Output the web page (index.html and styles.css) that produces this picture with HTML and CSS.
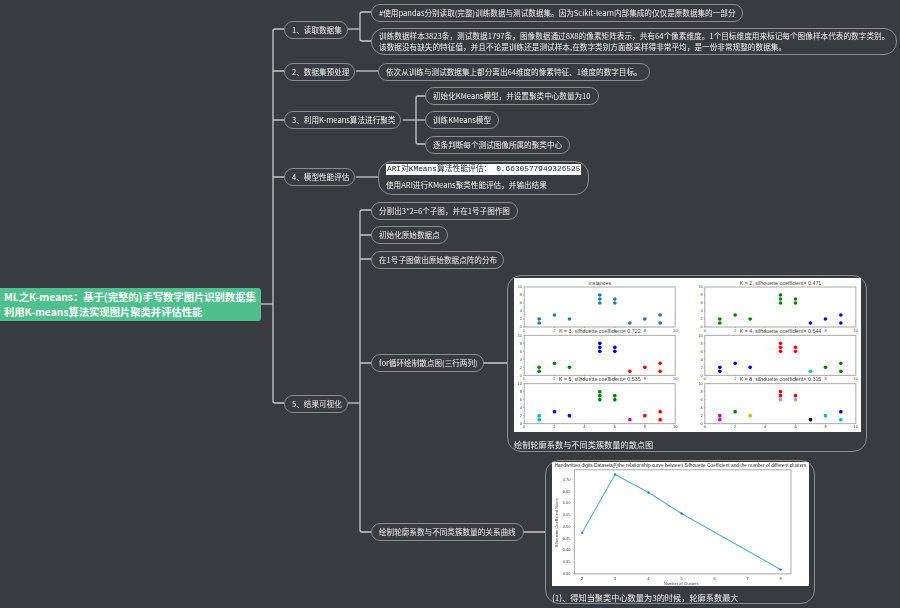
FILE: index.html
```html
<!DOCTYPE html>
<html lang="zh-CN">
<head>
  <meta charset="UTF-8" />
  <meta name="viewport" content="width=device-width, initial-scale=1.0"/>
  <title>ML之K-means</title>
  <link rel="stylesheet" href="styles.css">
</head>
<body>

  <div class="map">

    <!-- branch lines, drawn under the nodes -->
    <svg class="links" viewBox="0 0 900 608">
      <path d="M261 304H273"/>
      <path d="M284 29H275Q273 29 273 31V401Q273 403 275 403H284"/>
      <path d="M273 71H284M273 120H284M273 177H284"/>

      <path d="M348 29H360"/>
      <path d="M371 12H362Q360 12 360 14V39Q360 41 362 41H371"/>
      <path d="M356 71H378"/>

      <path d="M403 120H425"/>
      <path d="M425 96H418Q416 96 416 98V142Q416 144 418 144H425"/>
      <path d="M356 177H378"/>

      <path d="M348 403H360"/>
      <path d="M371 210H362Q360 210 360 212V530Q360 532 362 532H371"/>
      <path d="M360 235H371M360 259H371M360 363H371"/>
      <path d="M483 363H507M521 532H545"/>
    </svg>

    <div class="node root">ML之K-means：基于(完整的)手写数字图片识别数据集<br>利用K-means算法实现图片聚类并评估性能</div>

    <div class="node step n1">1、读取数据集</div>
    <div class="node step n2">2、数据集预处理</div>
    <div class="node step n3">3、利用K-means算法进行聚类</div>
    <div class="node step n4">4、模型性能评估</div>
    <div class="node step n5">5、结果可视化</div>

    <div class="node n1a">#使用pandas分别读取(完整)训练数据与测试数据集。因为Scikit-learn内部集成的仅仅是原数据集的一部分</div>
    <div class="node n1b">训练数据样本3823条，测试数据1797条，图像数据通过8X8的像素矩阵表示，共有64个像素维度。1个目标维度用来标记每个图像样本代表的数字类别。<br>该数据没有缺失的特征值，并且不论是训练还是测试样本,在数字类别方面都采样得非常平均，是一份非常规整的数据集。</div>
    <div class="node n2a">依次从训练与测试数据集上都分离出64维度的像素特征、1维度的数字目标。</div>
    <div class="node n3a">初始化KMeans模型，并设置聚类中心数量为10</div>
    <div class="node n3b">训练KMeans模型</div>
    <div class="node n3c">逐条判断每个测试图像所属的聚类中心</div>
    <div class="node n4a">
      <span class="score">ARI对KMeans算法性能评估： 0.6630577949326525</span>
      <span>使用ARI进行KMeans聚类性能评估，并输出结果</span>
    </div>

    <div class="node n5a">分割出3*2=6个子图，并在1号子图作图</div>
    <div class="node n5b">初始化原始数据点</div>
    <div class="node n5c">在1号子图做出原始数据点阵的分布</div>
    <div class="node n5d">for循环绘制散点图(三行两列)</div>
    <div class="node n5e">绘制轮廓系数与不同类簇数量的关系曲线</div>

    <div class="node n5d1">
      <svg class="plot scatter" viewBox="0 0 1040 462">
        <defs>
          <g id="p-a"><circle cx="45" cy="-12" r="5.5"/><circle cx="45" cy="-24" r="5.5"/></g>
          <g id="p-b"><circle cx="91" cy="-36" r="5.5"/></g>
          <g id="p-c"><circle cx="136" cy="-24" r="5.5"/></g>
          <g id="p-d"><circle cx="227" cy="-72" r="5.5"/><circle cx="272" cy="-72" r="5.5"/></g>
          <g id="p-e"><circle cx="227" cy="-84" r="5.5"/><circle cx="227" cy="-96" r="5.5"/><circle cx="272" cy="-84" r="5.5"/></g>
          <g id="p-f"><circle cx="317" cy="-12" r="5.5"/></g>
          <g id="p-g"><circle cx="362" cy="-24" r="5.5"/></g>
          <g id="p-h"><circle cx="408" cy="-12" r="5.5"/></g>
          <g id="p-i"><circle cx="408" cy="-36" r="5.5"/></g>
          <g id="frame">
            <rect class="frame" x="0" y="-120" width="453" height="120"/>
            <path class="ticks" d="M91 0v3M181 0v3M272 0v3M362 0v3M0 0h-3M0 -24h-3M0 -48h-3M0 -72h-3M0 -96h-3"/>
            <text x="0" y="14" class="tick">0</text><text x="91" y="14" class="tick">2</text>
            <text x="181" y="14" class="tick">4</text><text x="272" y="14" class="tick">6</text>
            <text x="362" y="14" class="tick">8</text><text x="453" y="14" class="tick">10</text>
            <text x="-10" y="4" class="tick">0</text><text x="-10" y="-20" class="tick">2</text>
            <text x="-10" y="-44" class="tick">4</text><text x="-10" y="-68" class="tick">6</text>
            <text x="-10" y="-92" class="tick">8</text><text x="-13" y="-116" class="tick">10</text>
          </g>
        </defs>

        <g transform="translate(30 147)">
          <use href="#frame"/>
          <text class="title" x="227" y="-127">instances</text>
          <g fill="#1f77b4">
            <use href="#p-a"/><use href="#p-b"/><use href="#p-c"/><use href="#p-d"/><use href="#p-e"/>
            <use href="#p-f"/><use href="#p-g"/><use href="#p-h"/><use href="#p-i"/>
          </g>
        </g>
        <g transform="translate(572 147)">
          <use href="#frame"/>
          <text class="title" x="227" y="-127">K = 2, silhouette coefficient= 0.471</text>
          <g fill="#008000">
            <use href="#p-a"/><use href="#p-b"/><use href="#p-c"/><use href="#p-d"/><use href="#p-e"/>
          </g>
          <g fill="#0000ff">
            <use href="#p-f"/><use href="#p-g"/><use href="#p-h"/><use href="#p-i"/>
          </g>
        </g>
        <g transform="translate(30 292)">
          <use href="#frame"/>
          <text class="title" x="227" y="-127">K = 3, silhouette coefficient= 0.722</text>
          <g fill="#008000"><use href="#p-a"/><use href="#p-b"/><use href="#p-c"/></g>
          <g fill="#0000ff"><use href="#p-d"/><use href="#p-e"/></g>
          <g fill="#ff0000"><use href="#p-f"/><use href="#p-g"/><use href="#p-h"/><use href="#p-i"/></g>
        </g>
        <g transform="translate(572 292)">
          <use href="#frame"/>
          <text class="title" x="227" y="-127">K = 4, silhouette coefficient= 0.644</text>
          <g fill="#0000ff"><use href="#p-a"/><use href="#p-b"/><use href="#p-c"/></g>
          <g fill="#ff0000"><use href="#p-d"/><use href="#p-e"/></g>
          <use href="#p-f" fill="#00bfbf"/>
          <g fill="#008000"><use href="#p-g"/><use href="#p-h"/><use href="#p-i"/></g>
        </g>
        <g transform="translate(30 437)">
          <use href="#frame"/>
          <text class="title" x="227" y="-127">K = 5, silhouette coefficient= 0.535</text>
          <use href="#p-a" fill="#00bfbf"/>
          <g fill="#0000ff"><use href="#p-b"/><use href="#p-c"/></g>
          <g fill="#008000"><use href="#p-d"/><use href="#p-e"/></g>
          <use href="#p-f" fill="#bf00bf"/>
          <g fill="#ff0000"><use href="#p-g"/><use href="#p-h"/><use href="#p-i"/></g>
        </g>
        <g transform="translate(572 437)">
          <use href="#frame"/>
          <text class="title" x="227" y="-127">K = 8, silhouette coefficient= 0.315</text>
          <use href="#p-a" fill="#bf00bf"/>
          <use href="#p-b" fill="#008000"/>
          <use href="#p-c" fill="#bfbf00"/>
          <use href="#p-d" fill="#9aa0ff"/>
          <use href="#p-e" fill="#ff0000"/>
          <use href="#p-f" fill="#000000"/>
          <g fill="#00bfbf"><use href="#p-g"/><use href="#p-h"/></g>
          <use href="#p-i" fill="#0000ff"/>
        </g>
      </svg>
      <span>绘制轮廓系数与不同类簇数量的散点图</span>
    </div>

    <div class="node n5e1">
      <svg class="plot curve" viewBox="0 0 770 371">
        <text class="title" x="385" y="15">Handwritten digits Datasets的the relationship curve between Silhouette Coefficient and the number of different clusters</text>
        <rect class="frame" x="67" y="23" width="649" height="312"/>
        <g>
          <text class="tick" x="90" y="353">2</text><text class="tick" x="189" y="353">3</text>
          <text class="tick" x="289" y="353">4</text><text class="tick" x="388" y="353">5</text>
          <text class="tick" x="487" y="353">6</text><text class="tick" x="586" y="353">7</text>
          <text class="tick" x="685" y="353">8</text>
        </g>
        <g>
          <text class="tick" x="44" y="57">0.70</text><text class="tick" x="44" y="92">0.65</text>
          <text class="tick" x="44" y="127">0.60</text><text class="tick" x="44" y="162">0.55</text>
          <text class="tick" x="44" y="197">0.50</text><text class="tick" x="44" y="232">0.45</text>
          <text class="tick" x="44" y="267">0.40</text><text class="tick" x="44" y="302">0.35</text>
          <text class="tick" x="44" y="337">0.30</text>
        </g>
        <text class="tick" x="387" y="367">Number of Clusters</text>
        <text class="tick" transform="translate(19 182) rotate(-90)">Silhouette Coefficient Score</text>
        <polyline class="line" points="90,212 189,37 289,91 388,154 685,322"/>
        <g class="marks">
          <circle cx="90" cy="212" r="3.5"/><circle cx="189" cy="37" r="3.5"/><circle cx="289" cy="91" r="3.5"/>
          <circle cx="388" cy="154" r="3.5"/><circle cx="685" cy="322" r="3.5"/>
        </g>
      </svg>
      <span>(1)、得知当聚类中心数量为3的时候，轮廓系数最大</span>
    </div>

  </div>

</body>
</html>
```

FILE: styles.css
```css
body {
  margin: 0;
  background: #383b40;
  font-family: "Noto Sans CJK SC", "Noto Sans", sans-serif;
}

.map {
  position: relative;
  width: 900px;
  height: 608px;
  overflow: hidden;
  filter: blur(0.3px);
}

.links {
  position: absolute;
  left: 0;
  top: 0;
  width: 900px;
  height: 608px;
}

.links path {
  fill: none;
  stroke: #c9c9c9;
  stroke-width: 1.3;
}

.node {
  position: absolute;
  box-sizing: border-box;
  height: 18px;
  padding: 0 7px;
  border: 1px solid #8b8d90;
  border-radius: 9px;
  background: #383b40;
  color: #f0f0f0;
  font-size: 7.6px;
  line-height: 16px;
  white-space: nowrap;
}

.root {
  left: -6px;
  top: 288px;
  width: 267px;
  height: 33px;
  padding: 1px 0 0 10px;
  border: none;
  border-radius: 3px;
  background: #4fc08d;
  color: #fff;
  font-size: 10.3px;
  font-weight: 700;
  line-height: 15px;
}

.step {
  padding-right: 5px;
}

.n1 { left: 284px; top: 21px; }
.n2 { left: 284px; top: 63px; }
.n3 { left: 284px; top: 111px; }
.n4 { left: 284px; top: 168px; }
.n5 { left: 284px; top: 395px; }

.n1a { left: 371px; top: 4px; }
.n1b {
  left: 371px;
  top: 28px;
  height: 27px;
  border-radius: 13px;
  padding-top: 1px;
  font-size: 7.65px;
  line-height: 11px;
}
.n2a { left: 378px; top: 63px; }
.n3a { left: 425px; top: 87px; }
.n3b { left: 425px; top: 111px; }
.n3c { left: 425px; top: 136px; }

.n4a {
  left: 378px;
  top: 161px;
  height: 34px;
  display: flex;
  flex-direction: column;
  gap: 3px;
  padding-top: 2px;
  border-radius: 14px;
  line-height: 13px;
}

.score {
  background: #fff;
  color: #222;
  font-family: "Liberation Mono", "Noto Sans CJK SC", monospace;
  font-size: 7.8px;
  line-height: 11px;
  padding: 0 1px;
}

.n5a { left: 371px; top: 202px; }
.n5b { left: 371px; top: 226px; }
.n5c { left: 371px; top: 251px; padding-right: 6px; }
.n5d { left: 371px; top: 354px; padding-right: 5px; }
.n5e { left: 371px; top: 523px; }

.n5d1,
.n5e1 {
  display: flex;
  flex-direction: column;
  border-radius: 14px;
  padding: 2px 6px 0;
  font-size: 8.2px;
  line-height: 14px;
}

.n5d1 {
  left: 507px;
  top: 275px;
  width: 360px;
  height: 177px;
  gap: 5px;
}

.n5e1 {
  left: 545px;
  top: 460px;
  width: 270px;
  height: 144px;
  padding-top: 1px;
  gap: 4px;
}

.plot {
  display: block;
  flex: none;
  background: #fff;
}

.scatter {
  width: 347px;
  height: 154px;
}

.curve {
  width: 257px;
  height: 124px;
}

.plot text {
  fill: #444;
  font-family: "Liberation Sans", sans-serif;
  text-anchor: middle;
}

.scatter .tick { font-size: 12px; }
.scatter .title { font-size: 16px; }
.curve .tick { font-size: 12px; }
.curve .title { font-size: 14.4px; fill: #333; }

.frame {
  fill: #fff;
  stroke: #a8a8a8;
  stroke-width: 3;
}

.ticks {
  fill: none;
  stroke: #777;
  stroke-width: 1.5;
}

.line {
  fill: none;
  stroke: #5ba6dc;
  stroke-width: 3;
}

.marks { fill: #2f82c0; }
```
